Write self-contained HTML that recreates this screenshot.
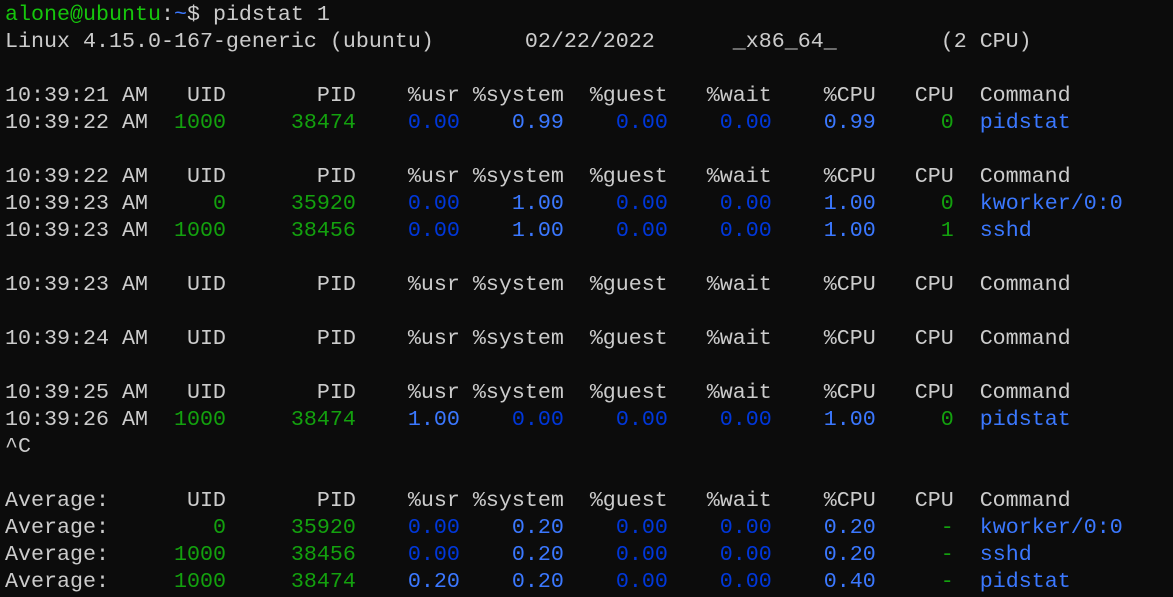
<!DOCTYPE html>
<html><head><meta charset="utf-8"><style>
html,body{margin:0;background:#0c0c0c;width:1173px;height:597px;overflow:hidden}
pre{margin:0;padding:1px 0 0 5px;font-family:"Liberation Mono",monospace;font-size:21.67px;line-height:27px;color:#cccccc;white-space:pre}
.g{color:#13a10e}.G{color:#16c60c}.b{color:#0037da}.B{color:#3b78ff}
</style></head><body><pre><span class="G">alone@ubuntu</span>:<span class="B">~</span>$ pidstat 1
Linux 4.15.0-167-generic (ubuntu)       02/22/2022      _x86_64_        (2 CPU)

10:39:21 AM   UID       PID    %usr %system  %guest   %wait    %CPU   CPU  Command
10:39:22 AM  <span class="g">1000</span>     <span class="g">38474</span>    <span class="b">0.00</span>    <span class="B">0.99</span>    <span class="b">0.00</span>    <span class="b">0.00</span>    <span class="B">0.99</span>     <span class="g">0</span>  <span class="B">pidstat</span>

10:39:22 AM   UID       PID    %usr %system  %guest   %wait    %CPU   CPU  Command
10:39:23 AM     <span class="g">0</span>     <span class="g">35920</span>    <span class="b">0.00</span>    <span class="B">1.00</span>    <span class="b">0.00</span>    <span class="b">0.00</span>    <span class="B">1.00</span>     <span class="g">0</span>  <span class="B">kworker/0:0</span>
10:39:23 AM  <span class="g">1000</span>     <span class="g">38456</span>    <span class="b">0.00</span>    <span class="B">1.00</span>    <span class="b">0.00</span>    <span class="b">0.00</span>    <span class="B">1.00</span>     <span class="g">1</span>  <span class="B">sshd</span>

10:39:23 AM   UID       PID    %usr %system  %guest   %wait    %CPU   CPU  Command

10:39:24 AM   UID       PID    %usr %system  %guest   %wait    %CPU   CPU  Command

10:39:25 AM   UID       PID    %usr %system  %guest   %wait    %CPU   CPU  Command
10:39:26 AM  <span class="g">1000</span>     <span class="g">38474</span>    <span class="B">1.00</span>    <span class="b">0.00</span>    <span class="b">0.00</span>    <span class="b">0.00</span>    <span class="B">1.00</span>     <span class="g">0</span>  <span class="B">pidstat</span>
^C

Average:      UID       PID    %usr %system  %guest   %wait    %CPU   CPU  Command
Average:        <span class="g">0</span>     <span class="g">35920</span>    <span class="b">0.00</span>    <span class="B">0.20</span>    <span class="b">0.00</span>    <span class="b">0.00</span>    <span class="B">0.20</span>     <span class="g">-</span>  <span class="B">kworker/0:0</span>
Average:     <span class="g">1000</span>     <span class="g">38456</span>    <span class="b">0.00</span>    <span class="B">0.20</span>    <span class="b">0.00</span>    <span class="b">0.00</span>    <span class="B">0.20</span>     <span class="g">-</span>  <span class="B">sshd</span>
Average:     <span class="g">1000</span>     <span class="g">38474</span>    <span class="B">0.20</span>    <span class="B">0.20</span>    <span class="b">0.00</span>    <span class="b">0.00</span>    <span class="B">0.40</span>     <span class="g">-</span>  <span class="B">pidstat</span></pre></body></html>
